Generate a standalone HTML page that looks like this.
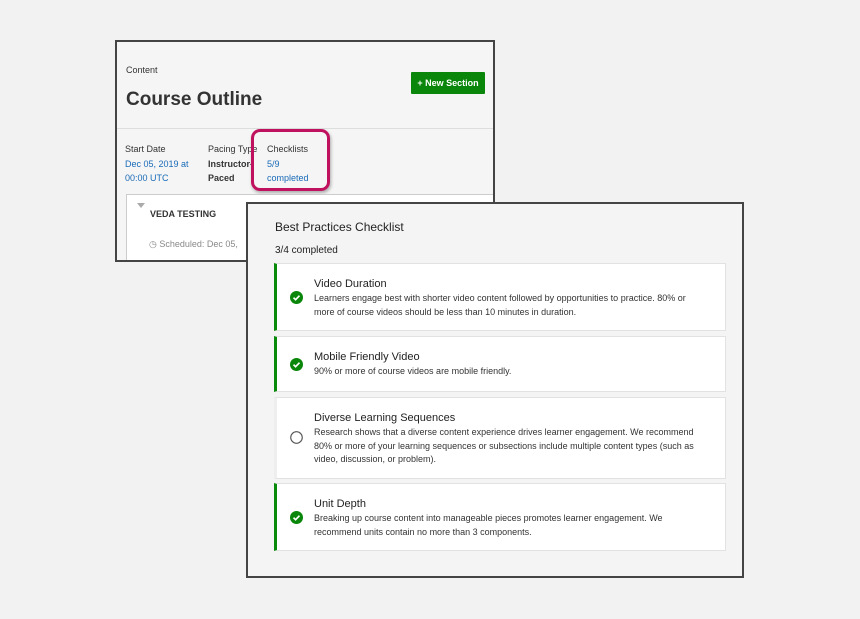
<!DOCTYPE html>
<html><head><style>
body{margin:0;width:860px;height:619px;background:#f2f2f2;font-family:"Liberation Sans",sans-serif;position:relative;overflow:hidden;color:#222}
.p1{position:absolute;left:115px;top:40px;width:376px;height:218px;border:2px solid #444;background:#f5f5f5;overflow:hidden}
.p2{position:absolute;left:246px;top:202px;width:494px;height:372px;border:2px solid #444;background:#f4f4f4}
.abs{position:absolute}
.item{position:absolute;left:26px;width:452px;background:#fff;border:1px solid #e2e2e2;border-left:3px solid #0a8a0a;box-sizing:border-box}
.item h4{position:absolute;left:37px;margin:0;font-weight:normal;font-size:11px;color:#222}
.item p{position:absolute;left:37px;margin:0;font-size:9px;line-height:13.5px;color:#333;width:420px;white-space:nowrap}
.ic{position:absolute;left:13px;width:13px;height:13px}
</style></head><body>
<div class="p1">
 <div class="abs" style="left:9px;top:23px;font-size:9px;color:#333">Content</div>
 <div class="abs" style="left:9px;top:47px;font-size:19px;font-weight:bold;color:#333">Course Outline</div>
 <div class="abs" style="left:294px;top:30px;width:74px;height:22px;background:#0a870a;color:#fff;font-size:9px;font-weight:bold;line-height:22px;text-align:center;border-radius:1px">+ New Section</div>
 <div class="abs" style="left:0;top:86px;width:376px;border-top:1px solid #ddd"></div>
 <div class="abs" style="left:8px;top:100px;font-size:9px;line-height:14.5px;color:#333">Start Date<br><span style="color:#1a6bb8">Dec 05, 2019 at<br>00:00 UTC</span></div>
 <div class="abs" style="left:91px;top:100px;font-size:9px;line-height:14.5px;color:#333">Pacing Type<br><b>Instructor-<br>Paced</b></div>
 <div class="abs" style="left:150px;top:100px;font-size:9px;line-height:14.5px;color:#333">Checklists<br><span style="color:#1a6bb8">5/9<br>completed</span></div>
 <div class="abs" style="left:134px;top:87px;width:73px;height:56px;border:3px solid #c0115e;border-radius:9px;box-shadow:1px 2px 3px rgba(0,0,0,.3)"></div>
 <div class="abs" style="left:9px;top:152px;width:370px;height:80px;background:#fff;border:1px solid #ccc"></div>
 <div class="abs" style="left:20px;top:161px;width:0;height:0;border-left:4px solid transparent;border-right:4px solid transparent;border-top:5px solid #aaa"></div>
 <div class="abs" style="left:33px;top:167px;font-size:9px;font-weight:bold;color:#333">VEDA TESTING</div>
 <div class="abs" style="left:32px;top:197px;font-size:9px;color:#888">◷ Scheduled: Dec 05,</div>
</div>
<div class="p2">
 <div class="abs" style="left:27px;top:16px;font-size:12px;color:#222">Best Practices Checklist</div>
 <div class="abs" style="left:27px;top:41px;font-size:10px;color:#222">3/4 completed</div>
 <div class="item" style="top:59px;height:68px"><svg class="ic" style="top:27px" viewBox="0 0 14 14"><circle cx="7" cy="7" r="7" fill="#0a870a"/><path d="M3.8 7.2l2.2 2.2 4.2-4.4" stroke="#fff" stroke-width="1.8" fill="none"/></svg><h4 style="top:14px">Video Duration</h4><p style="top:28px">Learners engage best with shorter video content followed by opportunities to practice. 80% or<br>more of course videos should be less than 10 minutes in duration.</p></div>
 <div class="item" style="top:132px;height:56px"><svg class="ic" style="top:21px" viewBox="0 0 14 14"><circle cx="7" cy="7" r="7" fill="#0a870a"/><path d="M3.8 7.2l2.2 2.2 4.2-4.4" stroke="#fff" stroke-width="1.8" fill="none"/></svg><h4 style="top:14px">Mobile Friendly Video</h4><p style="top:28px">90% or more of course videos are mobile friendly.</p></div>
 <div class="item" style="top:193px;height:82px;border-left:3px solid #eee"><svg class="ic" style="top:33px" viewBox="0 0 14 14"><circle cx="7" cy="7" r="6.2" fill="none" stroke="#555" stroke-width="1.2"/></svg><h4 style="top:14px">Diverse Learning Sequences</h4><p style="top:28px">Research shows that a diverse content experience drives learner engagement. We recommend<br>80% or more of your learning sequences or subsections include multiple content types (such as<br>video, discussion, or problem).</p></div>
 <div class="item" style="top:279px;height:68px"><svg class="ic" style="top:27px" viewBox="0 0 14 14"><circle cx="7" cy="7" r="7" fill="#0a870a"/><path d="M3.8 7.2l2.2 2.2 4.2-4.4" stroke="#fff" stroke-width="1.8" fill="none"/></svg><h4 style="top:14px">Unit Depth</h4><p style="top:28px">Breaking up course content into manageable pieces promotes learner engagement. We<br>recommend units contain no more than 3 components.</p></div>
</div>
</body></html>
